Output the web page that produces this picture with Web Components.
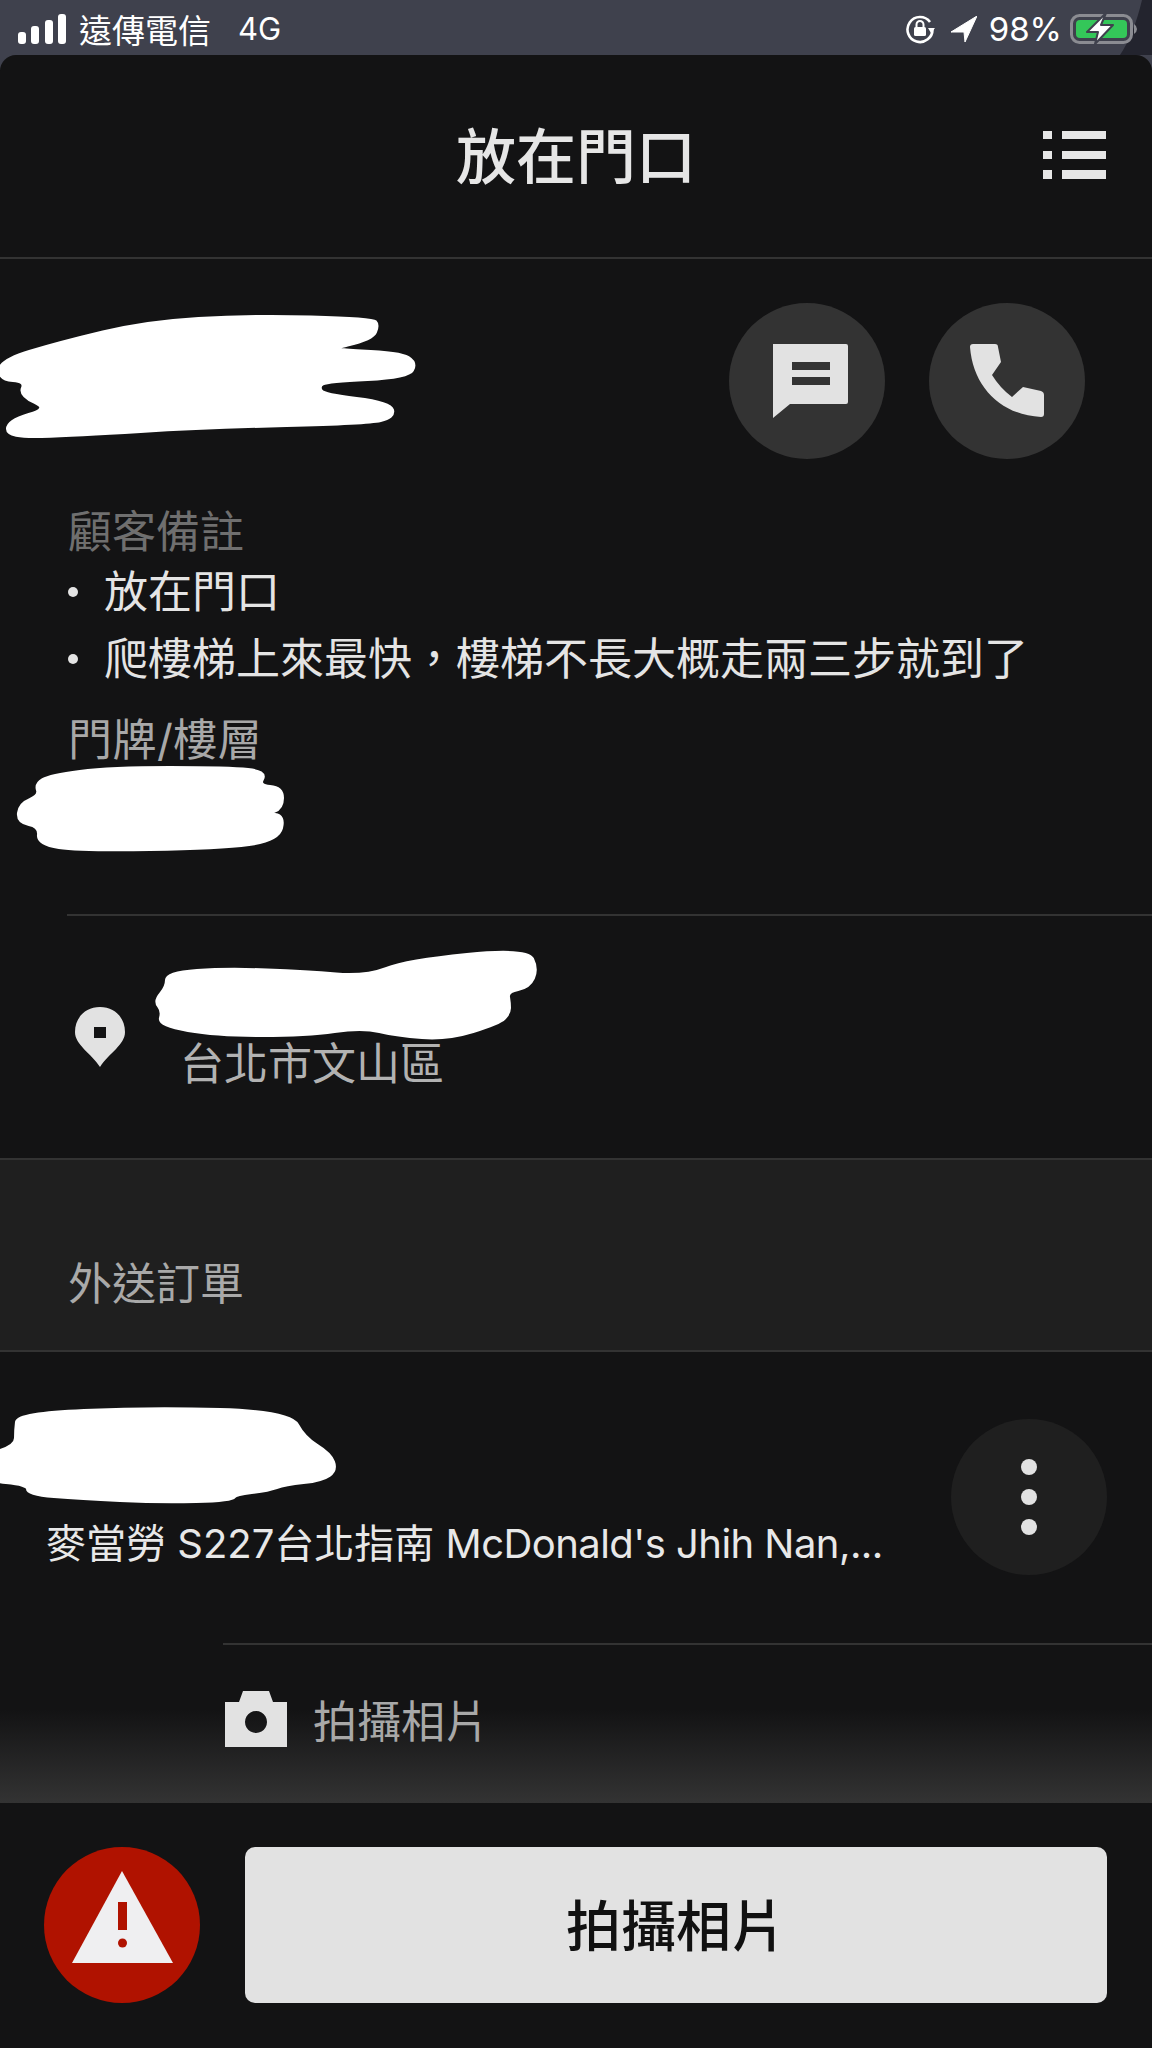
<!DOCTYPE html>
<html lang="zh-Hant">
<head>
<meta charset="utf-8">
<title>放在門口</title>
<style>
  html, body { margin: 0; }
  html { background: linear-gradient(#3f414d 70px, #131314 70px); }
  body {
    width: 1152px;
    height: 2048px;
    overflow: hidden;
    font-family: "Inter", "Noto Sans CJK TC", sans-serif;
    color: #e2e2e2;
  }
  .tail { letter-spacing: -0.55px; }
</style>
</head>
<body>
  <status-bar carrier="遠傳電信" network="4G" battery="98%"></status-bar>
  <app-header>放在門口</app-header>
  <contact-block>
    <note-label>顧客備註</note-label>
    <note-item>放在門口</note-item>
    <note-item class="next">爬樓梯上來最快，樓梯不長大概走兩三步就到了</note-item>
    <note-label slot="door" tone="light">門牌/樓層</note-label>
  </contact-block>
  <address-row>台北市文山區</address-row>
  <section-band>外送訂單</section-band>
  <order-row>麥當勞 S227台北指南 <span class="tail">McDonald's Jhih Nan,...</span></order-row>
  <photo-row>拍攝相片</photo-row>
  <action-bar>拍攝相片</action-bar>

<script>
// white marker strokes over the hidden names. points are px inside the box,
// corners get rounded by going through the midpoints
class ScribbleMark extends HTMLElement {
  connectedCallback() {
    const w = this.getAttribute("w");
    const h = this.getAttribute("h");
    const pts = this.getAttribute("points").trim().split(/\s+/).map((p) => p.split(",").map(Number));
    const mid = (a, b) => [(a[0] + b[0]) / 2, (a[1] + b[1]) / 2];
    let d = "M" + mid(pts[pts.length - 1], pts[0]).join(" ");
    pts.forEach((p, i) => {
      d += " Q" + p.join(" ") + " " + mid(p, pts[(i + 1) % pts.length]).join(" ");
    });
    this.attachShadow({ mode: "open" });
    this.shadowRoot.innerHTML = `
      <style>:host { display: block; width: ${w}px; height: ${h}px; } svg { display: block; overflow: visible; }</style>
      <svg width="${w}" height="${h}" viewBox="0 0 ${w} ${h}">
        <path d="${d} Z" fill="#fff" stroke="#fff" stroke-width="4" stroke-linejoin="round"/>
      </svg>`;
  }
}
customElements.define("scribble-mark", ScribbleMark);

class StatusBar extends HTMLElement {
  connectedCallback() {
    this.attachShadow({ mode: "open" });
    this.shadowRoot.innerHTML = `
      <style>
        :host { display: flex; align-items: center; height: 55px; color: #fff; position: relative; padding: 2px 0 0 18px; box-sizing: border-box; font-size: 33px; overflow: hidden; }
        .net { margin-left: 27px; font-size: 31px; }
        .carrier { margin-left: 13px; }
        .right { margin-left: auto; display: flex; align-items: center; position: relative; z-index: 1; }
        .pct { margin: 0 8px 0 12px; font-size: 33px; }
        svg { display: block; }
        .corner { position: absolute; top: 0; right: 0; }
      </style>
      <svg width="48" height="30" viewBox="0 0 48 30">
        <rect x="0" y="18" width="8" height="12" rx="3" fill="#fff"/>
        <rect x="13" y="12" width="8" height="18" rx="3" fill="#fff"/>
        <rect x="27" y="6" width="8" height="24" rx="3" fill="#fff"/>
        <rect x="40" y="0" width="8" height="30" rx="3" fill="#fff"/>
      </svg>
      <span class="carrier">${this.getAttribute("carrier")}</span>
      <span class="net">${this.getAttribute("network")}</span>
      <svg class="corner" width="34" height="55" viewBox="0 0 34 55"><path d="M24 0 Q16 34 2 55 H34 V0Z" fill="#23242e"/></svg>
      <div class="right">
        <svg width="30" height="30" viewBox="0 0 30 30">
          <path d="M25 8 A12.5 12.5 0 1 0 27.5 15" fill="none" stroke="#fff" stroke-width="2.6"/>
          <path d="M23 14 L30 14 L26 19Z" fill="#fff"/>
          <rect x="9" y="13" width="12" height="9" rx="1.5" fill="#fff"/>
          <path d="M11.5 13 V10.5 A3.5 3.5 0 0 1 18.5 10.5 V13" fill="none" stroke="#fff" stroke-width="2"/>
        </svg>
        <svg style="margin-left:16px" width="26" height="26" viewBox="0 0 26 26"><path d="M26 0 L0 16 H13 L14 26Z" fill="#fff" stroke="#fff" stroke-width="1" stroke-linejoin="round"/></svg>
        <span class="pct">${this.getAttribute("battery")}</span>
        <svg width="70" height="34" viewBox="0 0 70 34" style="margin-right:12px">
          <rect x="1.5" y="3.5" width="60" height="27" rx="8" fill="none" stroke="#8b8c92" stroke-width="3"/>
          <rect x="6" y="8" width="51" height="18" rx="4" fill="#34c759"/>
          <path d="M64 12 Q67 14 67 17 Q67 20 64 22Z" fill="#8b8c92"/>
          <path d="M36 1 L17 20 H28 L25 32 L43 13 H31Z" fill="#fff" stroke="#3f414d" stroke-width="2" stroke-linejoin="round"/>
        </svg>
      </div>`;
  }
}
customElements.define("status-bar", StatusBar);

const headerTpl = document.createElement("template");
headerTpl.innerHTML = `
  <style>
    :host { display: flex; align-items: center; justify-content: center; position: relative; height: 202px; background: #131314; border-radius: 16px 16px 0 0; color: #e6e6e6; }
    h1 { margin: 0; font-size: 60px; font-weight: 500; line-height: 80px; position: relative; top: 1px; }
    svg { position: absolute; left: 1043px; top: 75px; }
  </style>
  <h1><slot></slot></h1>
  <svg width="64" height="50" viewBox="0 0 64 50" fill="#e6e6e6">
    <rect x="0" y="1" width="9" height="8"/><rect x="19" y="1" width="44" height="8"/>
    <rect x="0" y="21" width="9" height="8"/><rect x="19" y="21" width="44" height="8"/>
    <rect x="0" y="40" width="9" height="9"/><rect x="19" y="40" width="44" height="9"/>
  </svg>`;
class AppHeader extends HTMLElement {
  constructor() {
    super();
    this.attachShadow({ mode: "open" });
    this.shadowRoot.appendChild(headerTpl.content.cloneNode(true));
  }
}
customElements.define("app-header", AppHeader);

class RoundButton extends HTMLElement {
  connectedCallback() {
    const bg = this.getAttribute("bg") || "#333";
    this.attachShadow({ mode: "open" });
    this.shadowRoot.innerHTML = `
      <style>
        :host { display: block; width: 156px; height: 156px; border-radius: 50%; background: ${bg}; flex: none; }
        ::slotted(svg) { display: block; }
      </style>
      <slot></slot>`;
  }
}
customElements.define("round-button", RoundButton);

const contactTpl = document.createElement("template");
contactTpl.innerHTML = `
  <style>
    :host { display: block; border-top: 2px solid #333; padding: 44px 0 64px; }
    .top { display: flex; justify-content: space-between; padding-right: 67px; margin-bottom: 45px; }
    .btns { display: flex; gap: 44px; }
    .notes { display: flex; flex-direction: column; }
  </style>
  <div class="top">
    <scribble-mark w="414" h="132" points="372,16 250,13 147,19 59,40 0,58 0,76 26,78 20,92 50,106 8,118 8,134 75,132 206,124 367,120 394,114 390,100 323,92 318,83 327,78 408,74 416,60 400,50 323,47 372,36 378,22"></scribble-mark>
    <div class="btns">
      <round-button>
        <svg width="156" height="156" viewBox="0 0 156 156">
          <path fill-rule="evenodd" fill="#e2e2e2" d="M44 41 H117 Q119 41 119 43 V99 Q119 101 117 101 H61 L44 115Z M63 59 V67 H101 V59Z M63 74 V82 H101 V74Z"/>
        </svg>
      </round-button>
      <round-button>
        <svg width="156" height="156" viewBox="0 0 156 156">
          <path fill="#e2e2e2" d="M44 41 H66 Q69 41 69 44 L72 59 L63 72 Q71 85 83 94 L94 84 L112 88 Q115 89 115 92 V111 Q115 114 112 114 C72 112 44 84 41 44 Q41 41 44 41Z"/>
        </svg>
      </round-button>
    </div>
  </div>
  <div class="notes"><slot></slot></div>
  <div style="margin-top:25px"><slot name="door"></slot></div>
  <scribble-mark w="262" h="82" style="margin-left:20px" points="30,8 90,0 210,0 246,4 238,18 262,20 262,40 246,46 264,48 258,72 200,80 60,82 18,76 20,58 -2,54 0,36 20,28 16,16"></scribble-mark>`;
class ContactBlock extends HTMLElement {
  constructor() {
    super();
    this.attachShadow({ mode: "open" });
    this.shadowRoot.appendChild(contactTpl.content.cloneNode(true));
  }
}
customElements.define("contact-block", ContactBlock);

class NoteLabel extends HTMLElement {
  connectedCallback() {
    const light = this.getAttribute("tone") === "light";
    this.attachShadow({ mode: "open" });
    this.shadowRoot.innerHTML = `
      <style>:host { display: block; padding-left: 68px; font-size: 44px; line-height: 56px; color: ${light ? "#a8a8a8" : "#6f6f6f"}; letter-spacing: ${light ? "0.5px" : "0"}; }</style>
      <slot></slot>`;
  }
}
customElements.define("note-label", NoteLabel);

const noteItemTpl = document.createElement("template");
noteItemTpl.innerHTML = `
  <style>
    :host { display: flex; align-items: center; padding-left: 68px; font-size: 44px; line-height: 56px; color: #e4e4e4; margin-top: 4px; }
    :host(.next) { margin-top: 11px; }
    i { width: 10px; height: 10px; border-radius: 50%; background: #e4e4e4; margin-right: 26px; flex: none; }
    span { margin-left: 0; }
  </style>
  <i></i><span><slot></slot></span>`;
class NoteItem extends HTMLElement {
  constructor() {
    super();
    this.attachShadow({ mode: "open" });
    this.shadowRoot.appendChild(noteItemTpl.content.cloneNode(true));
  }
}
customElements.define("note-item", NoteItem);

const addressTpl = document.createElement("template");
addressTpl.innerHTML = `
  <style>
    :host { display: block; height: 244px; box-sizing: border-box; position: relative; }
    .line { height: 2px; margin-left: 67px; background: #333; }
    .row { display: flex; padding: 39px 0 0 75px; }
    svg { display: block; margin: 52px 32px 0 0; flex: none; }
    .place { font-size: 44px; line-height: 56px; color: #b2b2b2; margin: -1px 0 0 23px; }
  </style>
  <div class="line"></div>
  <div class="row">
    <svg width="50" height="60" viewBox="0 0 50 60">
      <path fill-rule="evenodd" fill="#e2e2e2" d="M25 0 C40 0 50 11 50 25 C50 38 34 46 25 60 C16 46 0 38 0 25 C0 11 10 0 25 0Z M19 20 V31 H31 V20Z"/>
    </svg>
    <div>
      <scribble-mark w="378" h="82" points="10,18 70,14 150,17 208,22 250,6 370,-6 380,14 372,32 350,36 352,48 352,58 342,68 290,84 240,80 205,72 150,80 60,80 2,70 6,56 -2,46 10,32"></scribble-mark>
      <div class="place"><slot></slot></div>
    </div>
  </div>`;
class AddressRow extends HTMLElement {
  constructor() {
    super();
    this.attachShadow({ mode: "open" });
    this.shadowRoot.appendChild(addressTpl.content.cloneNode(true));
  }
}
customElements.define("address-row", AddressRow);

const bandTpl = document.createElement("template");
bandTpl.innerHTML = `
  <style>
    :host { display: flex; align-items: flex-end; box-sizing: border-box; height: 194px; padding: 0 0 38px 68px; background: #1f1f1f; border-top: 2px solid #333; border-bottom: 2px solid #333; font-size: 44px; line-height: 56px; color: #a9a9a9; }
  </style>
  <slot></slot>`;
class SectionBand extends HTMLElement {
  constructor() {
    super();
    this.attachShadow({ mode: "open" });
    this.shadowRoot.appendChild(bandTpl.content.cloneNode(true));
  }
}
customElements.define("section-band", SectionBand);

const orderTpl = document.createElement("template");
orderTpl.innerHTML = `
  <style>
    :host { display: flex; justify-content: space-between; box-sizing: border-box; height: 291px; padding: 67px 45px 0 0; }
    .info { display: flex; flex-direction: column; }
    .info scribble-mark { margin-top: -9px; }
    .name { font-size: 40px; line-height: 50px; color: #e8e8e8; margin: 17px 0 0 46px; white-space: nowrap; }
    .dots { display: flex; flex-direction: column; align-items: center; justify-content: center; gap: 14px; height: 156px; }
    .dots i { width: 16px; height: 16px; border-radius: 50%; background: #e2e2e2; }
  </style>
  <div class="info">
    <scribble-mark w="335" h="92" points="18,4 150,-2 290,2 304,28 330,44 336,60 322,70 285,74 268,80 235,84 232,90 160,92 80,88 28,84 28,74 -16,70 -16,46 16,36 16,20"></scribble-mark>
    <div class="name"><slot></slot></div>
  </div>
  <round-button bg="#1f1f1f"><div class="dots"><i></i><i></i><i></i></div></round-button>`;
class OrderRow extends HTMLElement {
  constructor() {
    super();
    this.attachShadow({ mode: "open" });
    this.shadowRoot.appendChild(orderTpl.content.cloneNode(true));
  }
}
customElements.define("order-row", OrderRow);

const photoTpl = document.createElement("template");
photoTpl.innerHTML = `
  <style>
    :host { display: block; height: 160px; background: linear-gradient(#131314 0%, #131314 42%, #333 100%); }
    .line { height: 2px; margin-left: 223px; background: #333; }
    .row { display: flex; align-items: flex-start; gap: 26px; padding: 46px 0 0 225px; font-size: 44px; line-height: 56px; color: #a8a8a8; }
    .row span { margin-top: 3px; }
    svg { display: block; flex: none; }
  </style>
  <div class="line"></div>
  <div class="row">
    <svg width="62" height="56" viewBox="0 0 62 56">
      <path fill-rule="evenodd" fill="#e2e2e2" d="M0 11 H14 L18 0 H44 L48 11 H62 V56 H0Z M31 20 A11 11 0 1 0 31.01 20Z"/>
    </svg>
    <span><slot></slot></span>
  </div>`;
class PhotoRow extends HTMLElement {
  constructor() {
    super();
    this.attachShadow({ mode: "open" });
    this.shadowRoot.appendChild(photoTpl.content.cloneNode(true));
  }
}
customElements.define("photo-row", PhotoRow);

const actionTpl = document.createElement("template");
actionTpl.innerHTML = `
  <style>
    :host { display: flex; gap: 45px; box-sizing: border-box; height: 245px; padding: 44px 45px 0 44px; background: #131314; }
    svg { display: block; }
    .primary { flex: 1; height: 156px; display: flex; align-items: center; justify-content: center; background: #e2e2e2; border-radius: 10px; color: #111; font-size: 55px; font-weight: 500; padding-bottom: 6px; box-sizing: border-box; }
  </style>
  <round-button bg="#b01200">
    <svg width="156" height="156" viewBox="0 0 156 156">
      <path d="M78 24 L129 116 H28Z" fill="#efeff1"/>
      <rect x="74" y="55" width="9" height="28" fill="#b01200"/>
      <circle cx="78.5" cy="96" r="4.5" fill="#b01200"/>
    </svg>
  </round-button>
  <div class="primary"><slot></slot></div>`;
class ActionBar extends HTMLElement {
  constructor() {
    super();
    this.attachShadow({ mode: "open" });
    this.shadowRoot.appendChild(actionTpl.content.cloneNode(true));
  }
}
customElements.define("action-bar", ActionBar);
</script>
</body>
</html>
